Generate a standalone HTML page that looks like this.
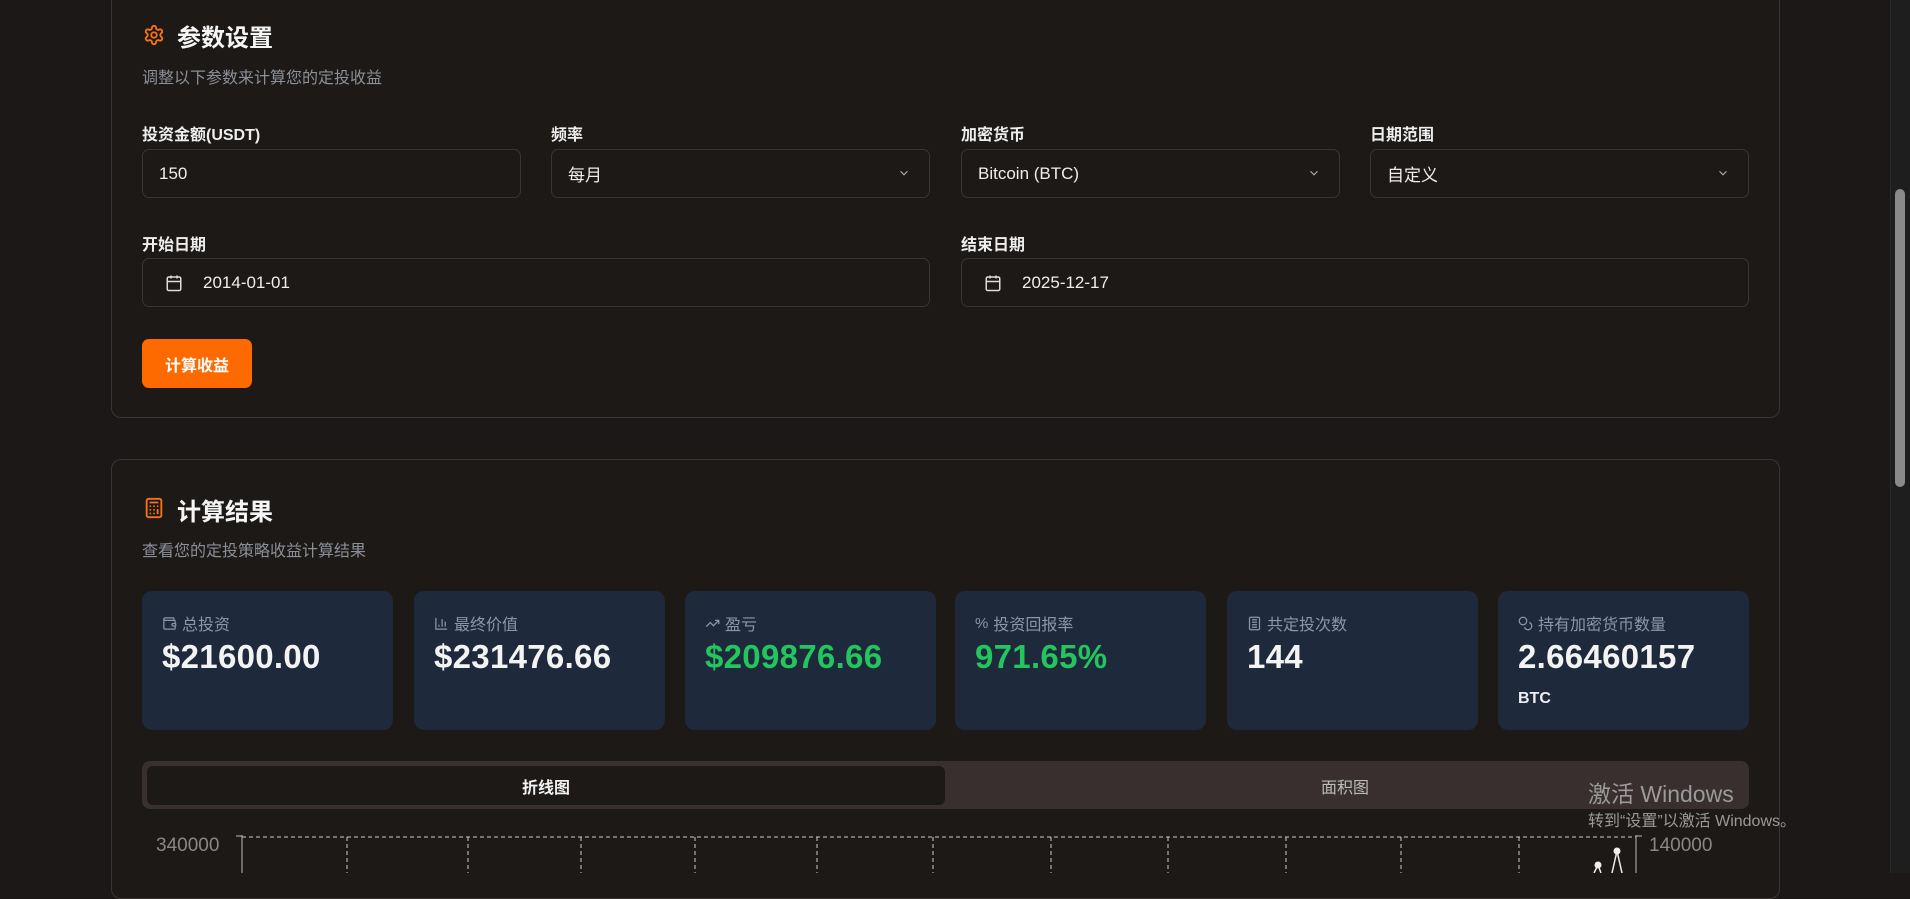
<!DOCTYPE html>
<html><head><meta charset="utf-8"><style>
*{box-sizing:border-box;margin:0;padding:0}
body{width:1910px;height:873px;overflow:hidden;background:#1b1817;font-family:"Liberation Sans","Noto Sans CJK SC",sans-serif;color:#f2f2f2;position:relative}
.card{position:absolute;left:111px;width:1669px;border:1px solid #3a3533;border-radius:10px;background:#1c1917}
.abs{position:absolute}
.title{font-size:24px;font-weight:bold;color:#f5f5f5}
.sub{font-size:16px;color:#8b8f98}
.lbl{font-size:16px;font-weight:bold;color:#eee}
.inp{position:absolute;height:49px;border:1px solid #3a3533;border-radius:7px;background:#1c1917;font-size:17px;color:#eee;display:flex;align-items:center;padding-left:16px}
.chev{position:absolute;right:18px;top:16px}
.stat{position:absolute;top:591px;width:251px;height:139px;background:#1e293b;border-radius:10px}
.stat .l{position:absolute;left:20px;top:20px;font-size:16px;color:#8c96a6;display:flex;align-items:center;gap:5px}
.stat .v{position:absolute;left:20px;top:47px;font-size:33px;font-weight:bold;color:#f3f3f3;letter-spacing:0.3px}
.g{color:#22c55e!important}
</style></head><body>

<div class="card" style="top:-20px;height:438px"></div>
<svg class="abs" style="left:143px;top:24px" width="22" height="22" viewBox="0 0 24 24" fill="none" stroke="#f97316" stroke-width="2" stroke-linecap="round" stroke-linejoin="round"><path d="M12.22 2h-.44a2 2 0 0 0-2 2v.18a2 2 0 0 1-1 1.73l-.43.25a2 2 0 0 1-2 0l-.15-.08a2 2 0 0 0-2.730.73l-.22.38a2 2 0 0 0 .73 2.73l.15.1a2 2 0 0 1 1 1.72v.51a2 2 0 0 1-1 1.740l-.15.09a2 2 0 0 0-.73 2.73l.22.38a2 2 0 0 0 2.73.73l.15-.08a2 2 0 0 1 2 0l.43.25a2 2 0 0 1 1 1.73V20a2 2 0 0 0 2 2h.44a2 2 0 0 0 2-2v-.18a2 2 0 0 1 1-1.73l.43-.25a2 2 0 0 1 2 0l.15.08a2 2 0 0 0 2.73-.73l.22-.39a2 2 0 0 0-.73-2.73l-.15-.08a2 2 0 0 1-1-1.74v-.5a2 2 0 0 1 1-1.74l.15-.09a2 2 0 0 0 .73-2.73l-.22-.38a2 2 0 0 0-2.73-.73l-.15.08a2 2 0 0 1-2 0l-.43-.25a2 2 0 0 1-1-1.73V4a2 2 0 0 0-2-2z"/><circle cx="12" cy="12" r="3"/></svg>
<div class="abs title" style="left:177px;top:18px">参数设置</div>
<div class="abs sub" style="left:142px;top:64px">调整以下参数来计算您的定投收益</div>

<div class="abs lbl" style="left:142px;top:121px">投资金额(USDT)</div>
<div class="abs lbl" style="left:551px;top:121px">频率</div>
<div class="abs lbl" style="left:961px;top:121px">加密货币</div>
<div class="abs lbl" style="left:1370px;top:121px">日期范围</div>
<div class="inp" style="left:142px;top:149px;width:379px">150</div>
<div class="inp" style="left:551px;top:149px;width:379px">每月<svg class="chev" width="14" height="14" viewBox="0 0 24 24" fill="none" stroke="#aaa" stroke-width="2"><path d="m6 9 6 6 6-6"/></svg></div>
<div class="inp" style="left:961px;top:149px;width:379px">Bitcoin (BTC)<svg class="chev" width="14" height="14" viewBox="0 0 24 24" fill="none" stroke="#aaa" stroke-width="2"><path d="m6 9 6 6 6-6"/></svg></div>
<div class="inp" style="left:1370px;top:149px;width:379px">自定义<svg class="chev" width="14" height="14" viewBox="0 0 24 24" fill="none" stroke="#aaa" stroke-width="2"><path d="m6 9 6 6 6-6"/></svg></div>

<div class="abs lbl" style="left:142px;top:231px">开始日期</div>
<div class="abs lbl" style="left:961px;top:231px">结束日期</div>
<div class="inp" style="left:142px;top:258px;width:788px;padding-left:22px"><svg width="18" height="18" viewBox="0 0 24 24" fill="none" stroke="#ddd" stroke-width="2"><rect x="3" y="4" width="18" height="18" rx="2"/><path d="M16 2v4M8 2v4M3 10h18"/></svg><span style="margin-left:20px">2014-01-01</span></div>
<div class="inp" style="left:961px;top:258px;width:788px;padding-left:22px"><svg width="18" height="18" viewBox="0 0 24 24" fill="none" stroke="#ddd" stroke-width="2"><rect x="3" y="4" width="18" height="18" rx="2"/><path d="M16 2v4M8 2v4M3 10h18"/></svg><span style="margin-left:20px">2025-12-17</span></div>

<div class="abs" style="left:142px;top:339px;width:110px;height:49px;background:#ff6a00;border-radius:7px;font-size:16px;font-weight:bold;color:#fff;display:flex;align-items:center;justify-content:center">计算收益</div>

<div class="card" style="top:459px;height:440px"></div>
<svg class="abs" style="left:143px;top:496px" width="22" height="24" viewBox="0 0 24 24" fill="none" stroke="#f97316" stroke-width="2" stroke-linecap="round"><rect x="4" y="2" width="16" height="20" rx="2"/><path d="M8 6h8M16 14v4M16 10h.01M12 10h.01M8 10h.01M12 14h.01M8 14h.01M12 18h.01M8 18h.01"/></svg>
<div class="abs title" style="left:177px;top:492px">计算结果</div>
<div class="abs sub" style="left:142px;top:537px">查看您的定投策略收益计算结果</div>

<div class="stat" style="left:142px"><div class="l"><svg width="15" height="15" viewBox="0 0 24 24" fill="none" stroke="#8c96a6" stroke-width="2"><path d="M19 7V4a1 1 0 0 0-1-1H5a2 2 0 0 0 0 4h15a1 1 0 0 1 1 1v4h-3a2 2 0 0 0 0 4h3a1 1 0 0 0 1-1v-2a1 1 0 0 0-1-1"/><path d="M3 5v14a2 2 0 0 0 2 2h15a1 1 0 0 0 1-1v-4"/></svg>总投资</div><div class="v">$21600.00</div></div>
<div class="stat" style="left:414px"><div class="l"><svg width="15" height="15" viewBox="0 0 24 24" fill="none" stroke="#8c96a6" stroke-width="2"><path d="M3 3v18h18M18 17V9M13 17V5M8 17v-3"/></svg>最终价值</div><div class="v">$231476.66</div></div>
<div class="stat" style="left:685px"><div class="l"><svg width="15" height="15" viewBox="0 0 24 24" fill="none" stroke="#8c96a6" stroke-width="2"><path d="M22 7 13.5 15.5 8.5 10.5 2 17M16 7h6v6"/></svg>盈亏</div><div class="v g">$209876.66</div></div>
<div class="stat" style="left:955px"><div class="l"><span style="font-size:15px">%</span> 投资回报率</div><div class="v g">971.65%</div></div>
<div class="stat" style="left:1227px"><div class="l"><svg width="15" height="15" viewBox="0 0 24 24" fill="none" stroke="#8c96a6" stroke-width="2"><rect x="4" y="2" width="16" height="20" rx="2"/><path d="M8 6h8M8 10h8M8 14h8M8 18h8"/></svg>共定投次数</div><div class="v">144</div></div>
<div class="stat" style="left:1498px"><div class="l"><svg width="15" height="15" viewBox="0 0 24 24" fill="none" stroke="#8c96a6" stroke-width="2"><circle cx="8" cy="8" r="6"/><path d="M18.09 10.37A6 6 0 1 1 10.34 18"/></svg>持有加密货币数量</div><div class="v">2.66460157</div><div class="abs" style="left:20px;top:99px;font-size:16px;font-weight:bold;color:#eee">BTC</div></div>

<div class="abs" style="left:142px;top:761px;width:1607px;height:48px;background:#3a2f2f;border-radius:8px"></div>
<div class="abs" style="left:147px;top:766px;width:798px;height:39px;background:#1c1917;border-radius:6px;font-size:16px;font-weight:bold;display:flex;align-items:center;justify-content:center">折线图</div>
<div class="abs" style="left:945px;top:766px;width:800px;height:39px;font-size:16px;color:#bbb;display:flex;align-items:center;justify-content:center">面积图</div>

<svg class="abs" style="left:0;top:830px" width="1910" height="43">
<g stroke="#ccc" stroke-width="1" stroke-dasharray="4 3">
<line x1="242" y1="7" x2="1636" y2="7"/>
<line x1="347" y1="7" x2="347" y2="43"/><line x1="468" y1="7" x2="468" y2="43"/><line x1="581" y1="7" x2="581" y2="43"/><line x1="695" y1="7" x2="695" y2="43"/><line x1="817" y1="7" x2="817" y2="43"/><line x1="933" y1="7" x2="933" y2="43"/><line x1="1051" y1="7" x2="1051" y2="43"/><line x1="1168" y1="7" x2="1168" y2="43"/><line x1="1286" y1="7" x2="1286" y2="43"/><line x1="1401" y1="7" x2="1401" y2="43"/><line x1="1519" y1="7" x2="1519" y2="43"/>
</g>
<g stroke="#bbb"><line x1="242" y1="5" x2="242" y2="43"/><line x1="1636" y1="5" x2="1636" y2="43"/><line x1="236" y1="6" x2="242" y2="6"/><line x1="1636" y1="6" x2="1642" y2="6"/></g>
<path d="M1594 43 L1598 35 L1601 43 M1612 43 L1617 21 L1622 43" stroke="#eee" fill="none" stroke-width="1.5"/>
<circle cx="1598" cy="35" r="3.5" fill="#eee"/><circle cx="1617" cy="21" r="3.5" fill="#eee"/>
<text x="156" y="21" fill="#888" font-size="19" font-family="Liberation Sans">340000</text>
<text x="1649" y="21" fill="#888" font-size="19" font-family="Liberation Sans">140000</text>
</svg>

<div class="abs" style="left:1588px;top:775px;font-size:23px;color:#9a9a9a">激活 Windows</div>
<div class="abs" style="left:1588px;top:807px;font-size:16px;color:#9a9a9a">转到“设置”以激活 Windows。</div>

<div class="abs" style="left:1890px;top:0;width:20px;height:873px;background:#1e1e1e;border-left:1px solid #2a2a2a"></div>
<div class="abs" style="left:1895px;top:189px;width:10px;height:298px;background:#8a8a8a;border-radius:5px"></div>
</body></html>
